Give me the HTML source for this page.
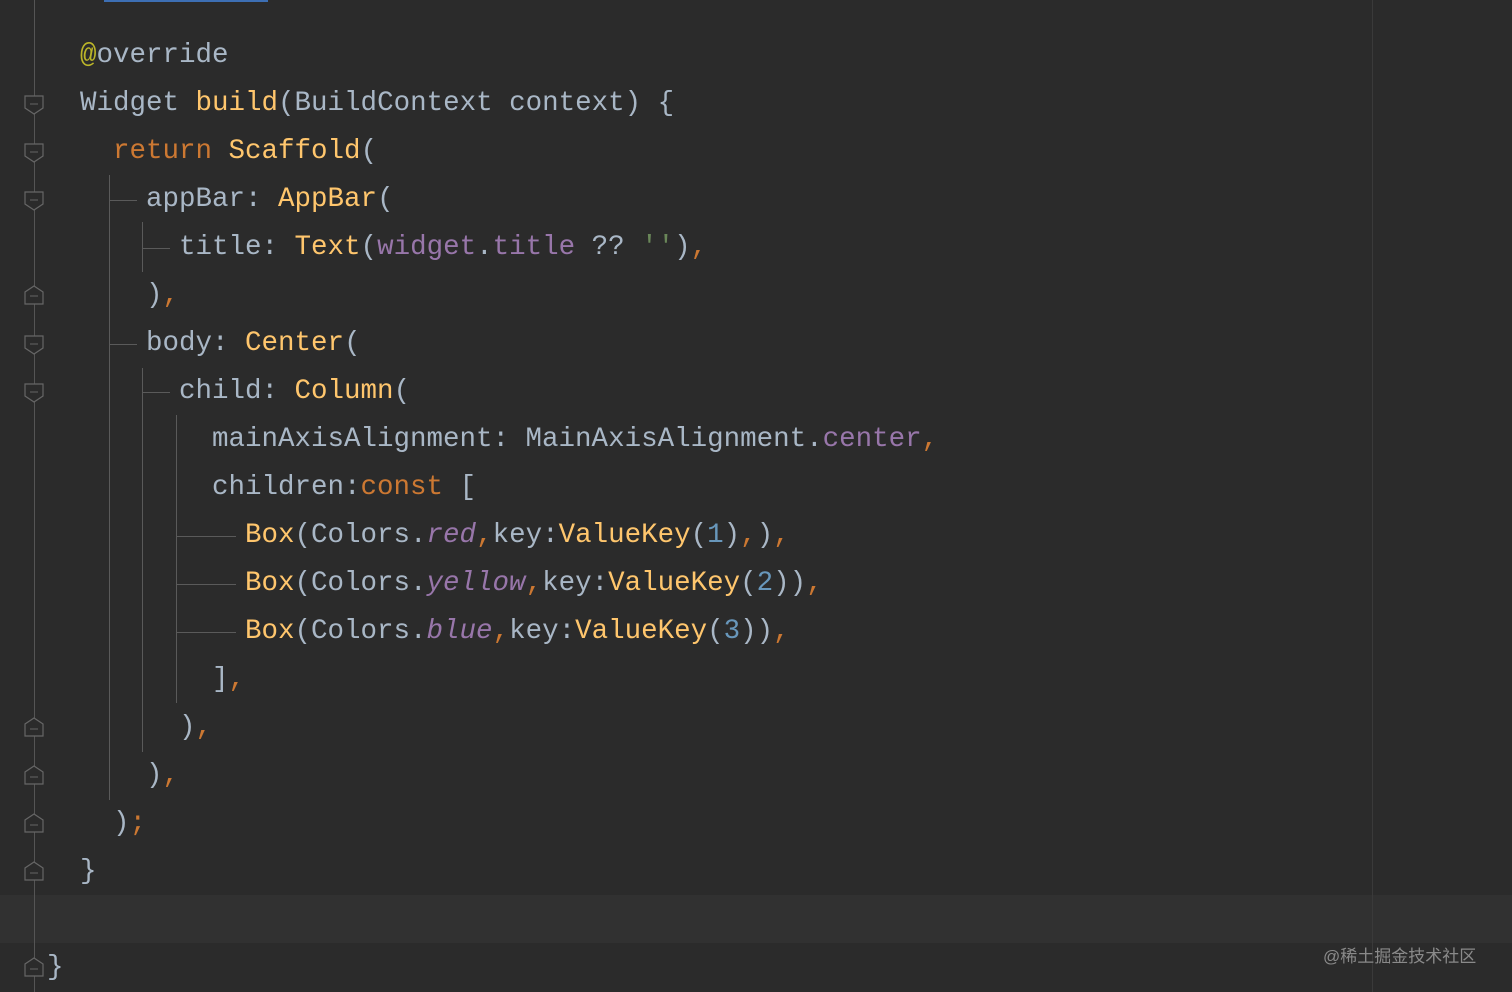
<!DOCTYPE html><html><head><meta charset="utf-8"><style>
body{margin:0;width:1512px;height:992px;background:#2b2b2b;overflow:hidden;position:relative;font-family:"Liberation Mono",monospace;}
.l{position:absolute;left:0;height:48px;line-height:48px;font-size:27.5px;color:#a9b7c6;white-space:pre;}
.k{color:#cc7832}.f{color:#ffc66d}.p{color:#9876aa}.i{color:#9876aa;font-style:italic}.n{color:#6897bb}.a{color:#bbb529}
.v{position:absolute;width:1px;background:#5a5a5a}.h{position:absolute;height:1px;background:#5a5a5a}
</style></head><body>
<div style="position:absolute;left:0;top:895px;width:1512px;height:48px;background:#313131"></div>
<div style="position:absolute;left:104px;top:0;width:164px;height:2px;background:#3d6fb4"></div>
<div class="v" style="left:1372px;top:0;height:992px;background:#3a3a3a"></div>
<div class="v" style="left:34px;top:0;height:992px;background:#555"></div>
<svg width="60" height="992" style="position:absolute;left:0;top:0">
<g fill="#2b2b2b" stroke="#666" stroke-width="1.2">
<path d="M25 96h18v12l-9 6l-9-6z"/><path d="M25 144h18v12l-9 6l-9-6z"/><path d="M25 192h18v12l-9 6l-9-6z"/>
<path d="M25 336h18v12l-9 6l-9-6z"/><path d="M25 384h18v12l-9 6l-9-6z"/>
<path d="M25 304h18v-12l-9-6l-9 6z"/><path d="M25 736h18v-12l-9-6l-9 6z"/><path d="M25 784h18v-12l-9-6l-9 6z"/>
<path d="M25 832h18v-12l-9-6l-9 6z"/><path d="M25 880h18v-12l-9-6l-9 6z"/><path d="M25 976h18v-12l-9-6l-9 6z"/>
</g>
<g stroke="#666" stroke-width="1"><path d="M30 104h8M30 152h8M30 200h8M30 344h8M30 392h8M30 296h8M30 729h8M30 777h8M30 825h8M30 873h8M30 969h8"/></g>
</svg>
<div class="v" style="left:109px;top:175px;height:625px"></div>
<div class="h" style="left:109px;top:200px;width:28px"></div>
<div class="h" style="left:109px;top:344px;width:28px"></div>
<div class="v" style="left:142px;top:222px;height:50px"></div>
<div class="h" style="left:142px;top:248px;width:28px"></div>
<div class="v" style="left:142px;top:368px;height:384px"></div>
<div class="h" style="left:142px;top:392px;width:28px"></div>
<div class="v" style="left:176px;top:415px;height:288px"></div>
<div class="h" style="left:176px;top:536px;width:60px"></div>
<div class="h" style="left:176px;top:584px;width:60px"></div>
<div class="h" style="left:176px;top:632px;width:60px"></div>
<div class="l" style="top:32px;left:80px"><span class="a">@</span>override</div>
<div class="l" style="top:80px;left:80px">Widget <span class="f">build</span>(BuildContext context) {</div>
<div class="l" style="top:128px;left:113px"><span class="k">return </span><span class="f">Scaffold</span>(</div>
<div class="l" style="top:176px;left:146px">appBar: <span class="f">AppBar</span>(</div>
<div class="l" style="top:224px;left:179px">title: <span class="f">Text</span>(<span class="p">widget</span>.<span class="p">title</span> ?? <span style="color:#6a8759">''</span>)<span class="k">,</span></div>
<div class="l" style="top:272px;left:146px">)<span class="k">,</span></div>
<div class="l" style="top:320px;left:146px">body: <span class="f">Center</span>(</div>
<div class="l" style="top:368px;left:179px">child: <span class="f">Column</span>(</div>
<div class="l" style="top:416px;left:212px">mainAxisAlignment: MainAxisAlignment.<span class="p">center</span><span class="k">,</span></div>
<div class="l" style="top:464px;left:212px">children:<span class="k">const </span>[</div>
<div class="l" style="top:512px;left:245px"><span class="f">Box</span>(Colors.<span class="i">red</span><span class="k">,</span>key:<span class="f">ValueKey</span>(<span class="n">1</span>)<span class="k">,</span>)<span class="k">,</span></div>
<div class="l" style="top:560px;left:245px"><span class="f">Box</span>(Colors.<span class="i">yellow</span><span class="k">,</span>key:<span class="f">ValueKey</span>(<span class="n">2</span>))<span class="k">,</span></div>
<div class="l" style="top:608px;left:245px"><span class="f">Box</span>(Colors.<span class="i">blue</span><span class="k">,</span>key:<span class="f">ValueKey</span>(<span class="n">3</span>))<span class="k">,</span></div>
<div class="l" style="top:656px;left:212px">]<span class="k">,</span></div>
<div class="l" style="top:704px;left:179px">)<span class="k">,</span></div>
<div class="l" style="top:752px;left:146px">)<span class="k">,</span></div>
<div class="l" style="top:800px;left:113px">)<span class="k">;</span></div>
<div class="l" style="top:848px;left:80px">}</div>
<div class="l" style="top:944px;left:47px">}</div>
<div style="position:absolute;left:1323px;top:942px;font-size:17px;color:#8a8a8a;font-family:'Liberation Sans','Noto Sans CJK SC',sans-serif">@稀土掘金技术社区</div>
</body></html>
